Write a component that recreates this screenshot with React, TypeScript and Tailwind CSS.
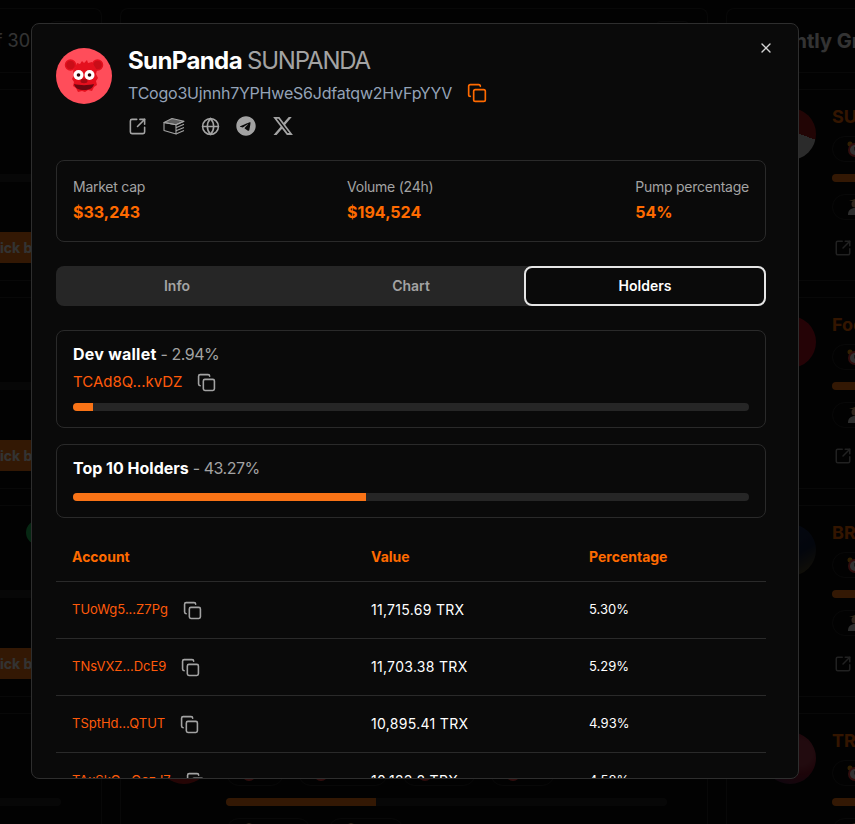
import { Copy, Globe, SquareArrowOutUpRight, X } from "lucide-react";
import { FaTelegram, FaXTwitter } from "react-icons/fa6";

const holders = [
  { account: "TUoWg5...Z7Pg", value: "11,715.69 TRX", percentage: "5.30%" },
  { account: "TNsVXZ...DcE9", value: "11,703.38 TRX", percentage: "5.29%" },
  { account: "TSptHd...QTUT", value: "10,895.41 TRX", percentage: "4.93%" },
  { account: "TAxSkG...QozJ7", value: "10,123.8 TRX", percentage: "4.58%" },
];

const stats = [
  { label: "Market cap", value: "$33,243" },
  { label: "Volume (24h)", value: "$194,524" },
  { label: "Pump percentage", value: "54%" },
];

const panels = [
  {
    title: "",
    meta: "of 30",
    rows: [
      { name: "", fill: "w-[64%]", avatar: "bg-[#7c3aed]", badge: false, buy: true },
      { name: "", fill: "w-[52%]", avatar: "bg-[#2563eb]", badge: false, buy: true },
      { name: "", fill: "w-[40%]", avatar: "bg-[#16a34a]", badge: true, buy: true },
      { name: "", fill: "w-0", avatar: "bg-[#ca8a04]", badge: false, buy: true },
    ],
  },
  {
    title: "",
    meta: "",
    rows: [
      { name: "", fill: "w-[54%]", avatar: "bg-[#ff4d5a]", badge: false, buy: false },
      { name: "", fill: "w-[71%]", avatar: "bg-[#0ea5e9]", badge: false, buy: false },
      { name: "", fill: "w-[28%]", avatar: "bg-[#22c55e]", badge: false, buy: false },
      { name: "", fill: "w-[34%]", avatar: "bg-[linear-gradient(180deg,#6b6b6b_50%,#b91c1c_50%)]", badge: false, buy: false },
    ],
  },
  {
    title: "Recently Graduated",
    meta: "",
    rows: [
      { name: "SUNWUKONG", fill: "w-full", avatar: "bg-[linear-gradient(200deg,#a81a1a_45%,#d4d4d4_45%)]", badge: false, buy: false },
      { name: "Football", fill: "w-full", avatar: "bg-[radial-gradient(circle_at_20%_50%,#d9a441_25%,#b80f22_50%)]", badge: false, buy: false },
      { name: "BRETT", fill: "w-full", avatar: "bg-[linear-gradient(150deg,#1c2f5c,#121f3f_60%,#6b5a20)]", badge: false, buy: false },
      { name: "TRUMP", fill: "w-full", avatar: "bg-[radial-gradient(circle_at_70%_40%,#a83a4c_25%,#8f1830_45%,#1c2a5c)]", badge: false, buy: false },
    ],
  },
];

function ClockEmoji() {
  return (
    <svg width="16" height="18" viewBox="0 0 16 18" className="shrink-0">
      <circle cx="3" cy="4" r="2.5" fill="#f59e0b" />
      <circle cx="13" cy="4" r="2.5" fill="#f59e0b" />
      <circle cx="8" cy="10" r="7" fill="#ef4444" />
      <circle cx="8" cy="10" r="5" fill="#f5f5f5" />
      <path d="M8 7v3h3" stroke="#333" strokeWidth="1.2" fill="none" />
    </svg>
  );
}

function PersonEmoji() {
  return (
    <svg width="16" height="18" viewBox="0 0 16 18" className="shrink-0">
      <path d="M2 3h12L8 1z" fill="#e5c07b" />
      <circle cx="8" cy="6" r="3.5" fill="#e8b88f" />
      <path d="M1 17c0-5 3-7 7-7s7 2 7 7z" fill="#e5e5e5" />
    </svg>
  );
}

function Pill({ icon, width }: { icon: "clock" | "person"; width: string }) {
  return (
    <div className={`flex h-[26px] shrink-0 items-center rounded-full border border-[#2a2a2a] pl-3.5 ${width}`}>
      {icon === "clock" ? <ClockEmoji /> : <PersonEmoji />}
    </div>
  );
}

function BookStackIcon() {
  return (
    <svg width="22" height="18" viewBox="0 0 22 18" fill="none" stroke="currentColor" strokeWidth="1.1" strokeLinejoin="round">
      <path d="M1 5.5 9 1.5l12 2.7-8 3.6z" fill="currentColor" fillOpacity="0.55" />
      <path d="M1 5.5v8l12 3.5V7.8z" />
      <path d="M13 7.8l8-3.6M13 10.7l8-3.4M13 13.8l8-3.4M13 17l8-3.6" />
    </svg>
  );
}

function PandaLogo() {
  return (
    <svg viewBox="0 0 56 56" className="size-14 shrink-0">
      <circle cx="28" cy="28" r="28" fill="#ff4d5a" />
      <circle cx="14.5" cy="17" r="5" fill="#c90d18" stroke="#e4101e" strokeWidth="1.5" />
      <circle cx="41.5" cy="17" r="5" fill="#c90d18" stroke="#e4101e" strokeWidth="1.5" />
      <path d="M21 15l3 1 2-3 2 2 3-3 1 3 4-1 3 5 2 3-1 4 2 4-2 3 1 4-3 2-2 4-4-1-3 2-3-1-4 1-2-4-3-2 1-4-2-3 2-4-1-4 2-3z" fill="#e4101e" />
      <circle cx="22.5" cy="27" r="5" fill="#fff" />
      <circle cx="33.5" cy="27" r="5" fill="#fff" />
      <circle cx="22.5" cy="27" r="1.8" fill="#30060a" />
      <circle cx="33.5" cy="27" r="1.8" fill="#30060a" />
      <ellipse cx="28" cy="33" rx="3.5" ry="2.2" fill="#a50a14" />
      <path d="M18 36c5 1.5 15 1.5 20 0-1 4.5-5 6-10 6s-9-1.500-10-6z" fill="#6f0610" />
    </svg>
  );
}

function BackgroundPanels() {
  return (
    <div className="ml-[-486px] flex h-screen w-max gap-[18px] overflow-hidden pt-2">
      {panels.map((panel, index) => (
        <section key={index} className="w-[588px] shrink-0 rounded-t-lg border-x border-t border-[#2a2a2a]">
          <div className="mb-4 flex h-[64px] items-start justify-between border-b border-[#2a2a2a] pl-[19px] pr-[17px] pt-3">
            <h2 className="pt-1.5 text-xl font-bold text-white">{panel.title}</h2>
            <div className="flex items-center gap-[19px]">
              {panel.meta && <span className="text-lg text-white">{panel.meta}</span>}
              <div className="h-10 w-[35px] rounded-md border border-[#2a2a2a]" />
            </div>
          </div>

          <div className="flex flex-col gap-4">
            {panel.rows.map((row, rowIndex) => (
              <div key={rowIndex} className="flex h-[192px] gap-4 border-y border-[#2a2a2a] pl-[37px] pr-10 pt-[14px]">
                <div className={`mt-1 size-[52px] shrink-0 rounded-full ${row.avatar}`} />

                <div className="min-w-0 flex-1">
                  <div className="flex h-[25px] items-center justify-between">
                    <h3 className="text-lg font-bold text-[#ff6a00]">{row.name}</h3>
                    {row.badge && <span className="h-[25px] w-[35px] rounded-full bg-[#22c55e]" />}
                  </div>

                  <div className="mt-[7px] flex gap-3.5">
                    <Pill icon="clock" width="w-[58px]" />
                    <Pill icon="clock" width="w-[90px]" />
                    <Pill icon="clock" width="w-[74px]" />
                    <Pill icon="clock" width="w-[65px]" />
                  </div>

                  <div className="mt-3 h-2 overflow-hidden rounded-full bg-[#262626]">
                    <div className={`h-full bg-[#ff7a14] ${row.fill}`} />
                  </div>

                  <div className="mt-3 flex gap-[17px]">
                    <Pill icon="person" width="w-[85px]" />
                    <Pill icon="person" width="w-[76px]" />
                  </div>

                  <div className="mt-3 flex h-[31px] items-center justify-between text-[#a3a3a3]">
                    <SquareArrowOutUpRight size={18} className="ml-0.5" />
                    {row.buy && (
                      <button type="button" className="h-[31px] w-[92px] rounded bg-[#ff7a14] text-sm font-bold text-white">
                        Quick buy
                      </button>
                    )}
                  </div>
                </div>
              </div>
            ))}
          </div>
        </section>
      ))}
    </div>
  );
}

function TokenModal() {
  return (
    <div className="absolute left-[31px] top-[23px] h-[756px] w-[768px] overflow-hidden rounded-lg border border-[#2e2e2e] bg-[#0a0a0a] py-6 pl-6 pr-8 text-white">
      <button type="button" aria-label="Close" className="absolute right-6 top-4 text-[#d4d4d4]">
        <X size={16} />
      </button>

      <div className="flex gap-4">
        <PandaLogo />

        <div className="min-w-0">
          <div className="mt-px flex h-6 items-center gap-[5px] text-2xl leading-6">
            <span className="font-bold tracking-[-0.6px]">SunPanda</span>
            <span className="tracking-[-1.2px] text-[#a3a3a3]">SUNPANDA</span>
          </div>

          <div className="mt-[10px] flex h-5 items-center gap-[15px]">
            <span className="text-base tracking-[-0.22px] text-[#94a3b8]">TCogo3Ujnnh7YPHweS6Jdfatqw2HvFpYYV</span>
            <Copy size={20} className="text-[#ff6a00]" />
          </div>

          <div className="mt-[13px] flex h-5 items-center gap-4 text-[#a3a3a3]">
            <SquareArrowOutUpRight size={19} />
            <BookStackIcon />
            <Globe size={19} />
            <FaTelegram size={20} />
            <FaXTwitter size={22} />
          </div>
        </div>
      </div>

      <div className="mt-[24px] flex h-[82px] items-center justify-between rounded-lg border border-[#2a2a2a] px-4 pb-0.5">
        {stats.map((stat) => (
          <div key={stat.label}>
            <p className="text-sm leading-5 tracking-[-0.25px] text-[#a3a3a3]">{stat.label}</p>
            <p className="mt-[3px] text-base font-bold leading-6 text-[#ff6a00]">{stat.value}</p>
          </div>
        ))}
      </div>

      <div className="mt-6 grid h-10 grid-cols-3 rounded-lg bg-[#262626] p-1 text-sm font-semibold">
        <div className="flex items-center justify-center text-[#a3a3a3]">Info</div>
        <div className="flex items-center justify-center text-[#a3a3a3]">Chart</div>
        <div className="-m-1 flex items-center justify-center rounded-lg border-2 border-[#e5e5e5] bg-[#0a0a0a] text-white">
          Holders
        </div>
      </div>

      <div className="mt-6 h-[98px] rounded-lg border border-[#2a2a2a] px-4 pt-[11px]">
        <p className="text-base leading-6">
          <span className="font-bold tracking-[0.25px]">Dev wallet</span>
          <span className="tracking-[-0.5px] text-[#a3a3a3]"> - 2.94%</span>
        </p>
        <div className="mt-1 flex h-6 items-center gap-[15px]">
          <span className="text-[15px] text-[#ff5a0a]">TCAd8Q...kvDZ</span>
          <Copy size={19} className="text-[#a3a3a3]" />
        </div>
        <div className="mt-[9px] h-2 overflow-hidden rounded-full bg-[#262626]">
          <div className="h-full w-[2.94%] bg-[#f97316]" />
        </div>
      </div>

      <div className="mt-4 h-[74px] rounded-lg border border-[#2a2a2a] px-4 pt-[11px]">
        <p className="text-base leading-6">
          <span className="font-bold">Top 10 Holders</span>
          <span className="tracking-[-0.5px] text-[#a3a3a3]"> - 43.27%</span>
        </p>
        <div className="mt-[13px] h-2 overflow-hidden rounded-full bg-[#262626]">
          <div className="h-full w-[43.27%] bg-[#f97316]" />
        </div>
      </div>

      <table className="mt-[15px] w-full table-fixed text-left text-[13px]">
        <thead>
          <tr className="h-12 border-b border-[#2a2a2a] text-sm font-bold text-[#ff6a00]">
            <th className="w-[299px] pl-4 font-bold">Account</th>
            <th className="w-[218px] pl-4 font-bold">Value</th>
            <th className="pl-4 font-bold">Percentage</th>
          </tr>
        </thead>
        <tbody>
          {holders.map((holder) => (
            <tr key={holder.account} className="h-[57px] border-b border-[#2a2a2a]">
              <td className="pl-4 pt-px">
                <div className="flex items-center gap-[15px]">
                  <span className="text-[#ff5a0a]">{holder.account}</span>
                  <Copy size={19} className="text-[#a3a3a3]" />
                </div>
              </td>
              <td className="pl-4 pt-px text-sm tracking-[0.3px]">{holder.value}</td>
              <td className="pl-4 pt-px">{holder.percentage}</td>
            </tr>
          ))}
        </tbody>
      </table>
    </div>
  );
}

export default function App() {
  return (
    <div className="relative h-screen overflow-hidden bg-[#0a0a0a] font-['Inter',sans-serif]">
      <BackgroundPanels />
      <div className="absolute inset-0 bg-black/80" />
      <TokenModal />
    </div>
  );
}
